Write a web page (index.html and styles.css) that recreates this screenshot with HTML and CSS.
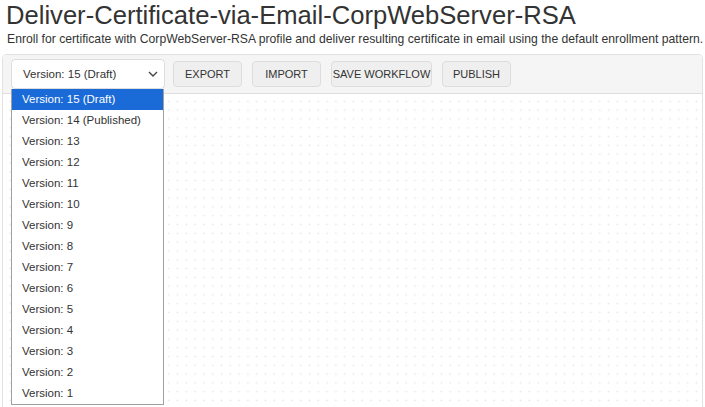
FILE: index.html
```html
<!DOCTYPE html>
<html lang="en">
<head>
    <meta charset="UTF-8">
    <title>Deliver-Certificate-via-Email-CorpWebServer-RSA</title>
    <link rel="stylesheet" href="styles.css">
</head>
<body>
    <!-- Header -->
    <h1 class="title">Deliver-Certificate-via-Email-CorpWebServer-RSA</h1>
    <p class="subtitle">Enroll for certificate with CorpWebServer-RSA profile and deliver resulting certificate in email using the default enrollment pattern.</p>

    <!-- Workflow designer -->
    <div class="designer">
        <div class="toolbar">
            <div class="version-picker">
                <div class="version-select">
                    <span>Version: 15 (Draft)</span>
                    <svg class="chevron" width="10" height="6" viewBox="0 0 10 6">
                        <path d="M1 1 L5 5 L9 1" fill="none" stroke="#444" stroke-width="1.4"/>
                    </svg>
                </div>
                <ul class="version-list">
                    <li class="selected">Version: 15 (Draft)</li>
                    <li>Version: 14 (Published)</li>
                    <li>Version: 13</li>
                    <li>Version: 12</li>
                    <li>Version: 11</li>
                    <li>Version: 10</li>
                    <li>Version: 9</li>
                    <li>Version: 8</li>
                    <li>Version: 7</li>
                    <li>Version: 6</li>
                    <li>Version: 5</li>
                    <li>Version: 4</li>
                    <li>Version: 3</li>
                    <li>Version: 2</li>
                    <li>Version: 1</li>
                </ul>
            </div>
            <button class="tool-btn">EXPORT</button>
            <button class="tool-btn">IMPORT</button>
            <button class="tool-btn wide">SAVE WORKFLOW</button>
            <button class="tool-btn">PUBLISH</button>
        </div>
        <div class="canvas"></div>
    </div>
</body>
</html>
```

FILE: styles.css
```css
/* Global */
* {
    box-sizing: border-box;
    margin: 0;
    padding: 0;
}

html, body {
    height: 100%;
    overflow: hidden;
}

body {
    font-family: "Liberation Sans", Arial, sans-serif;
    background-color: #fff;
    color: #333;
    display: flex;
    flex-direction: column;
}

/* Header */
.title {
    font-size: 25.6px;
    font-weight: normal;
    line-height: 30px;
    padding-left: 6px;
    color: #333;
}

.subtitle {
    font-size: 12.2px;
    line-height: 16px;
    padding-left: 7px;
    margin-top: 1px;
    white-space: nowrap;
    color: #333;
}

/* Designer */
.designer {
    flex: 1;
    margin: 7px 2px 0 2px;
    border: 1px solid #e2e2e2;
    border-bottom: none;
    border-radius: 5px 5px 0 0;
    display: flex;
    flex-direction: column;
}

.toolbar {
    background-color: #f5f5f5;
    border-bottom: 1px solid #ddd;
    border-radius: 5px 5px 0 0;
    height: 39px;
    padding: 4px 0 0 8px;
    display: flex;
    align-items: flex-start;
}

.version-picker {
    position: relative;
    width: 154px;
    margin-right: 8px;
}

.version-select {
    height: 30px;
    background-color: #fff;
    border: 1px solid #ddd;
    border-radius: 4px;
    display: flex;
    align-items: center;
    justify-content: space-between;
    padding: 0 6px 0 11px;
    font-size: 11.5px;
    color: #333;
}

.version-list {
    list-style-type: none;
    position: absolute;
    top: 30px;
    left: 0;
    width: 153px;
    background-color: #fff;
    border: 1px solid #a0a0a0;
    border-top: none;
    z-index: 10;
}

.version-list li {
    height: 21px;
    line-height: 21px;
    padding-left: 10px;
    font-size: 11.5px;
    color: #333;
}

.version-list li.selected {
    background-color: #1a6ad8;
    color: #fff;
}

.tool-btn {
    height: 26px;
    width: 69px;
    margin-top: 2px;
    margin-right: 10px;
    background-color: #efefef;
    border: 1px solid #ddd;
    border-radius: 4px;
    font-family: "Liberation Sans", Arial, sans-serif;
    font-size: 11px;
    white-space: nowrap;
    color: #333;
}

.tool-btn.wide {
    width: 101px;
}

.canvas {
    flex: 1;
    background-color: #fff;
    background-image: radial-gradient(circle, #e8e8e8 0.8px, transparent 1.1px);
    background-size: 8.8px 8.8px;
    background-position: 3px 3px;
}
```
